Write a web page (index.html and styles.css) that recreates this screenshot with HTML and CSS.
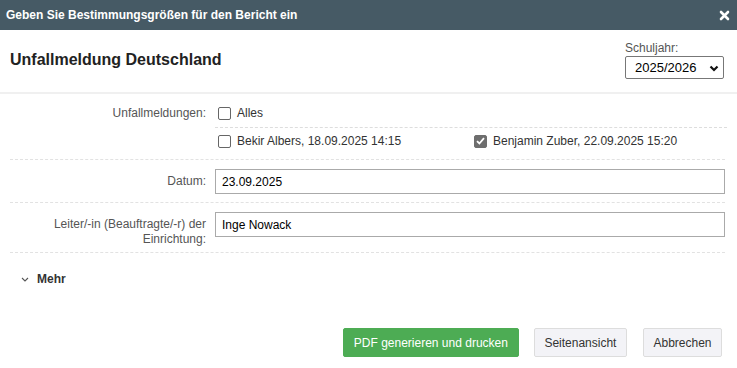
FILE: index.html
```html
<!DOCTYPE html>
<html lang="de">
<head>
  <meta charset="UTF-8" />
  <title>Unfallmeldung Deutschland</title>
  <link rel="stylesheet" href="styles.css">
</head>
<body>
  <div class="dialog">
    <div class="dialog-head">
      <span class="dialog-title">Geben Sie Bestimmungsgrößen für den Bericht ein</span>
      <svg class="close" width="11" height="11" viewBox="0 0 11 11">
        <path d="M2 2 L9 9 M9 2 L2 9" stroke="#fff" stroke-width="2.6" stroke-linecap="round" />
      </svg>
    </div>

    <div class="report-head">
      <h1>Unfallmeldung Deutschland</h1>
      <div class="year">
        <label>Schuljahr:</label>
        <div class="select-wrap">
          <select name="schoolYear">
            <option>2025/2026</option>
            <option>2024/2025</option>
          </select>
          <svg class="select-arrow" width="10" height="7" viewBox="0 0 10 7">
            <path d="M1.5 1.5 L5 5 L8.5 1.5" fill="none" stroke="#111" stroke-width="2.2" />
          </svg>
        </div>
      </div>
    </div>

    <form class="params">
      <div class="row">
        <div class="row-label">Unfallmeldungen:</div>
        <div class="row-field">
          <div class="check-line all">
            <label class="check"><span class="box"></span>Alles</label>
          </div>
          <div class="check-line items">
            <label class="check"><span class="box"></span>Bekir Albers, 18.09.2025 14:15</label>
            <label class="check"><span class="box checked">
              <svg width="9" height="8" viewBox="0 0 9 8"><path d="M1 4.2 L3.4 6.5 L8 1.2" fill="none" stroke="#fff" stroke-width="1.8" /></svg>
            </span>Benjamin Zuber, 22.09.2025 15:20</label>
          </div>
        </div>
      </div>

      <div class="row">
        <div class="row-label mid">Datum:</div>
        <div class="row-field">
          <input type="text" value="23.09.2025" />
        </div>
      </div>

      <div class="row">
        <div class="row-label">Leiter/-in (Beauftragte/-r) der Einrichtung:</div>
        <div class="row-field">
          <input type="text" value="Inge Nowack" />
        </div>
      </div>
    </form>

    <div class="more">
      <svg width="8" height="5" viewBox="0 0 8 5"><path d="M1 1 L4 4 L7 1" fill="none" stroke="#555" stroke-width="1.1" /></svg>
      <span>Mehr</span>
    </div>

    <div class="actions">
      <button class="btn primary" type="button">PDF generieren und drucken</button>
      <button class="btn" type="button">Seitenansicht</button>
      <button class="btn cancel" type="button">Abbrechen</button>
    </div>
  </div>
</body>
</html>
```

FILE: styles.css
```css
body {
  margin: 0;
  font-family: "Liberation Sans", Arial, sans-serif;
  font-size: 12px;
  color: #333;
  background: #fff;
}
.dialog {
  width: 737px;
}
.dialog-head {
  height: 30px;
  background: #465a65;
  color: #fff;
  display: flex;
  align-items: center;
  justify-content: space-between;
  padding: 0 7px 0 6px;
}
.dialog-title {
  font-weight: bold;
  font-size: 12px;
}
.close {
  margin-top: 1px;
}
.report-head {
  display: flex;
  justify-content: space-between;
  padding: 11px 13px 0 10px;
  height: 51px;
  border-bottom: 2px solid #f0f0f0;
}
.report-head h1 {
  margin: 10px 0 0;
  font-size: 16px;
  line-height: 18px;
  color: #222;
}
.year label {
  display: block;
  color: #555;
  font-size: 12px;
  line-height: 14px;
  margin-bottom: 1px;
}
.select-wrap {
  position: relative;
  width: 99px;
}
.select-wrap select {
  appearance: none;
  width: 99px;
  height: 23px;
  border: 1px solid #777;
  border-radius: 2px;
  background: #fff;
  font-family: "Liberation Sans", Arial, sans-serif;
  font-size: 13px;
  color: #000;
  padding: 0 0 0 9px;
}
.select-arrow {
  position: absolute;
  right: 5px;
  top: 9px;
  pointer-events: none;
}
.params {
  margin: 0 12px 0 10px;
}
.row {
  display: grid;
  grid-template-columns: 196px 1fr;
  column-gap: 9px;
  border-bottom: 1px dashed #e2e2e2;
  padding: 9px 0 8px;
}
.row:nth-child(3) {
  padding-bottom: 5px;
}
.row-label {
  text-align: right;
  color: #555;
  padding-left: 40px;
  padding-top: 3px;
  line-height: 15px;
}
.row:nth-child(3) .row-label {
  padding-top: 5px;
}
.row-label.mid {
  padding-top: 5px;
}
.check-line {
  height: 20px;
  display: flex;
  align-items: center;
}
.check-line.all {
  padding-bottom: 4px;
  border-bottom: 1px dashed #ddd;
  margin-bottom: 3px;
}
.check-line.items .check {
  width: 253px;
}
.check {
  display: flex;
  align-items: center;
  color: #333;
  padding-left: 3px;
}
.box {
  width: 11px;
  height: 11px;
  border: 1px solid #666;
  border-radius: 2px;
  margin-right: 6px;
  display: flex;
  align-items: center;
  justify-content: center;
}
.box.checked {
  background: #6e6e6e;
  border-color: #6e6e6e;
}
.row-field input {
  box-sizing: border-box;
  width: 100%;
  height: 25px;
  border: 1px solid #aaa;
  font-family: "Liberation Sans", Arial, sans-serif;
  font-size: 12px;
  color: #000;
  padding: 0 6px;
}
.more {
  display: flex;
  align-items: center;
  padding: 19px 0 0 21px;
  height: 14px;
}
.more svg {
  margin-right: 8px;
}
.more span {
  font-weight: bold;
  color: #333;
}
.actions {
  display: flex;
  justify-content: flex-end;
  gap: 15px;
  padding: 42px 15px 0 0;
}
.btn {
  height: 29px;
  padding: 0 9.5px;
  background: #f3f3f7;
  border: 1px solid #ddd;
  border-radius: 2px;
  font-family: "Liberation Sans", Arial, sans-serif;
  font-size: 12px;
  color: #333;
}
.btn.cancel {
  margin-left: 1px;
}
.btn.primary {
  background: #4dac54;
  border-color: #4dac54;
  color: #fff;
  padding: 0 10px;
}
```
